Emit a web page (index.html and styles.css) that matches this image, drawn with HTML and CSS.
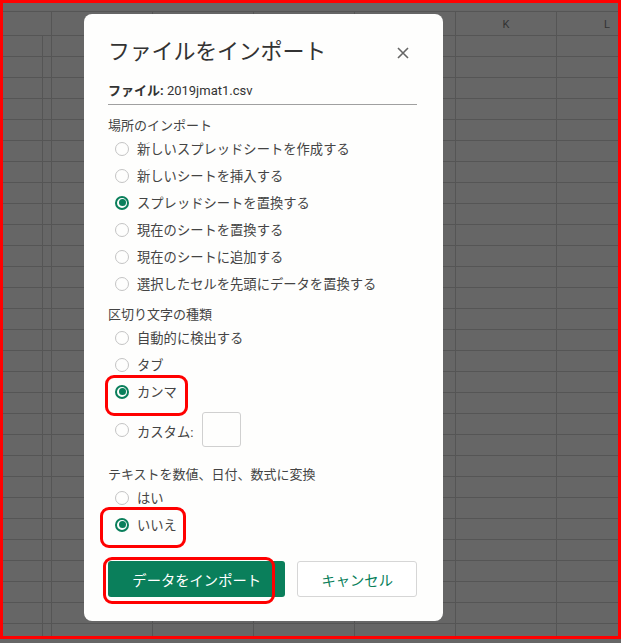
FILE: index.html
```html
<!DOCTYPE html>
<html lang="ja">
<head>
<meta charset="utf-8">
<title>ファイルをインポート</title>
<link rel="stylesheet" href="styles.css">
</head>
<body>
<div class="frame">
  <div class="sheet">
    <div class="strip"></div>
    <div class="colheads">
      <div class="rowhead"></div>
      <div class="col"></div>
      <div class="col"></div>
      <div class="col"></div>
      <div class="col"></div>
      <div class="col">K</div>
      <div class="col">L</div>
    </div>
    <div class="grid"></div>

    <div class="dialog">
      <div class="dhead">
        <h1 class="title">ファイルをインポート</h1>
        <svg class="close" width="12" height="12" viewBox="0 0 12 12"><path d="M1 1L11 11M11 1L1 11" stroke="#666" stroke-width="1.6" fill="none"/></svg>
      </div>
      <div class="file"><b>ファイル:</b> 2019jmat1.csv</div>

      <div class="label l1">場所のインポート</div>
      <div class="opt"><span class="radio"></span>新しいスプレッドシートを作成する</div>
      <div class="opt"><span class="radio"></span>新しいシートを挿入する</div>
      <div class="opt"><span class="radio on"></span>スプレッドシートを置換する</div>
      <div class="opt"><span class="radio"></span>現在のシートを置換する</div>
      <div class="opt"><span class="radio"></span>現在のシートに追加する</div>
      <div class="opt"><span class="radio"></span>選択したセルを先頭にデータを置換する</div>

      <div class="label l2">区切り文字の種類</div>
      <div class="opt"><span class="radio"></span>自動的に検出する</div>
      <div class="opt"><span class="radio"></span>タブ</div>
      <div class="opt"><span class="radio on"></span>カンマ</div>
      <div class="opt custom"><span class="radio"></span><span class="ctext">カスタム:</span><span class="box"></span></div>

      <div class="label l3">テキストを数値、日付、数式に変換</div>
      <div class="opt"><span class="radio"></span>はい</div>
      <div class="opt"><span class="radio on"></span>いいえ</div>

      <div class="buttons">
        <div class="btn primary">データをインポート</div>
        <div class="btn secondary">キャンセル</div>
      </div>

      <div class="mark m1"></div>
      <div class="mark m2"></div>
      <div class="mark m3"></div>
    </div>
  </div>
</div>
</body>
</html>
```

FILE: styles.css
```css
* { box-sizing: border-box; }
html, body { margin: 0; padding: 0; }
body {
  width: 621px;
  height: 643px;
  background: #666666;
  overflow: hidden;
  font-family: Roboto, "Noto Sans CJK JP", sans-serif;
}
.frame {
  width: 621px;
  height: 639px;
  border: 3px solid #ff0000;
  overflow: hidden;
}
.sheet {
  position: relative;
  width: 100%;
  height: 100%;
  background: #666666;
}
.strip {
  height: 9px;
  border-bottom: 1px solid #555;
}
.colheads {
  display: flex;
  height: 24px;
  border-bottom: 1px solid #555;
}
.rowhead {
  flex: 0 0 49px;
  border-right: 1px solid #555;
}
.col {
  flex: 0 0 101px;
  border-right: 1px solid #555;
  font-size: 11px;
  color: #333;
  display: flex;
  align-items: center;
  justify-content: center;
  padding-top: 1px;
}
.grid {
  height: 620px;
  background-image:
    repeating-linear-gradient(to bottom, transparent 0 20px, #555 20px 21px),
    repeating-linear-gradient(to right, #555 0 1px, transparent 1px 101px);
  background-position: 0 0, 48px 0;
}

.dialog {
  position: absolute;
  left: 81px;
  top: 11px;
  width: 359px;
  height: 607px;
  background: #fefefd;
  border-radius: 8px;
  padding: 23px 26px 0 24px;
  color: #444;
}
.dhead {
  display: flex;
  align-items: center;
  justify-content: space-between;
  height: 30px;
}
.title {
  margin: 0;
  font-size: 22px;
  line-height: 30px;
  font-weight: 400;
  color: #333;
  letter-spacing: -0.2px;
}
.close { margin-right: 8px; margin-top: 2px; }
.file {
  margin-top: 14px;
  font-size: 13px;
  line-height: 20px;
  color: #333;
  padding-bottom: 3px;
  border-bottom: 1px solid #a0a0a0;
}
.file b { font-weight: 700; }
.label {
  font-size: 13px;
  line-height: 18px;
  color: #444;
}
.l1 { margin-top: 12px; }
.l2 { margin-top: 9px; }
.l3 { margin-top: 19px; }
.opt {
  display: flex;
  align-items: center;
  height: 27px;
  padding-left: 7px;
  font-size: 13.3px;
  color: #444;
}
.radio {
  flex: 0 0 14px;
  width: 14px;
  height: 14px;
  border: 1.5px solid #c4c4c4;
  border-radius: 50%;
  margin-right: 8px;
  position: relative;
}
.radio.on {
  border: 2px solid #0a7f5b;
}
.radio.on::after {
  content: "";
  position: absolute;
  left: 1.5px;
  top: 1.5px;
  width: 7px;
  height: 7px;
  border-radius: 50%;
  background: #0a7f5b;
}
.opt.custom {
  height: 42px;
  padding-top: 7px;
}
.ctext { padding-top: 4px; }
.box {
  width: 39px;
  height: 35px;
  margin-left: 9px;
  border: 1px solid #d0d0d0;
  border-radius: 3px;
}
.buttons {
  display: flex;
  gap: 12px;
  margin-top: 23px;
}
.btn {
  height: 36px;
  display: flex;
  align-items: center;
  justify-content: center;
  font-size: 14.3px;
  border-radius: 3px;
}
.primary {
  width: 178px;
  background: #0a7f5b;
  color: #fff;
}
.secondary {
  width: 120px;
  background: #fff;
  border: 1px solid #d6d6d6;
  color: #0a7f5b;
}
.mark {
  position: absolute;
  border: 3px solid #ff0000;
  border-radius: 9px;
}
.m1 { left: 21px; top: 361px; width: 83px; height: 41px; }
.m2 { left: 16px; top: 493px; width: 86px; height: 41px; }
.m3 { left: 19px; top: 543px; width: 172px; height: 47px; }
```
